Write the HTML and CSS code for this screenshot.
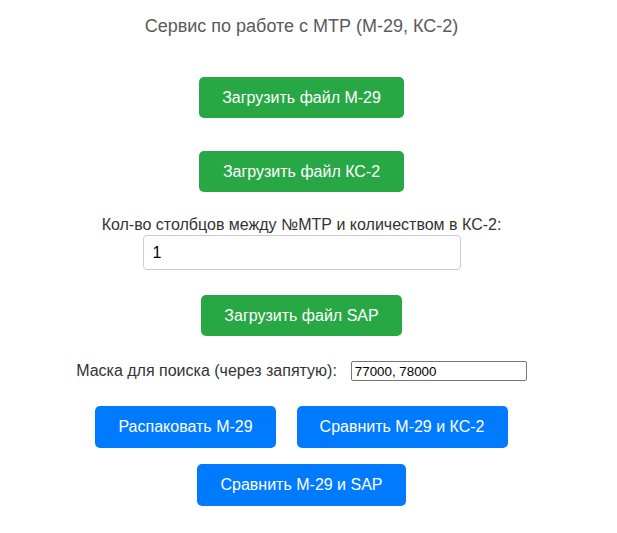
FILE: index.html
```html
<!DOCTYPE html>
<html lang="ru">
<head>
<meta charset="utf-8">
<title>Сервис по работе с МТР</title>
<link rel="stylesheet" href="styles.css">
</head>
<body>
<div class="page">
  <h1 class="title">Сервис по работе с МТР (М-29, КС-2)</h1>
  <button class="btn btn-green btn-upload btn-first">Загрузить файл М-29</button>
  <button class="btn btn-green btn-upload btn-second">Загрузить файл КС-2</button>
  <label class="field-label" for="cols">Кол-во столбцов между №МТР и количеством в КС-2:</label>
  <input class="field-input" id="cols" type="text" value="1">
  <button class="btn btn-green btn-sap">Загрузить файл SAP</button>
  <div class="mask-row">
    <label class="mask-label" for="mask">Маска для поиска (через запятую):</label>
    <input class="mask-input" id="mask" type="text" value="77000, 78000">
  </div>
  <div class="action-row">
    <button class="btn btn-blue">Распаковать М-29</button>
    <button class="btn btn-blue">Сравнить М-29 и КС-2</button>
  </div>
  <div class="action-row action-row-last">
    <button class="btn btn-blue">Сравнить М-29 и SAP</button>
  </div>
</div>
</body>
</html>
```

FILE: styles.css
```css
html, body {
  margin: 0;
  padding: 0;
  background: #ffffff;
}

body {
  font-family: "Liberation Sans", Arial, sans-serif;
  color: #333333;
}

.page {
  width: 603px;
  display: flex;
  flex-direction: column;
  align-items: center;
}

.title {
  margin: 15px 0 0;
  font-size: 18px;
  line-height: 22px;
  font-weight: normal;
  color: #5a5a5a;
}

.btn {
  font-family: "Liberation Sans", Arial, sans-serif;
  font-size: 16px;
  line-height: 21px;
  padding: 10px 23px;
  border: none;
  border-radius: 5px;
  color: #ffffff;
  cursor: pointer;
}

.btn-green {
  background: #28a745;
}

.btn-upload {
  min-width: 205px;
}

.btn-blue {
  background: #007bff;
  line-height: 22px;
}

.btn-first {
  margin-top: 40px;
}

.btn-second {
  margin-top: 33px;
}

.field-label {
  margin-top: 24px;
  font-size: 16px;
  line-height: 18px;
  color: #333333;
}

.field-input {
  margin-top: 1px;
  box-sizing: border-box;
  width: 318px;
  height: 35px;
  padding: 0 9px;
  border: 1px solid #cccccc;
  border-radius: 4px;
  font-family: "Liberation Sans", Arial, sans-serif;
  font-size: 16px;
  color: #000000;
}

.btn-sap {
  margin-top: 25px;
}

.mask-row {
  margin-top: 25px;
  display: flex;
  align-items: center;
  gap: 14px;
}

.mask-label {
  font-size: 16px;
  line-height: 18px;
  color: #333333;
}

.mask-input {
  box-sizing: border-box;
  width: 176px;
  height: 20px;
  padding: 1px 3px;
  border: 1px solid #767676;
  border-radius: 2px;
  font-family: "Liberation Sans", Arial, sans-serif;
  font-size: 13.33px;
  color: #000000;
}

.action-row {
  margin-top: 25px;
  display: flex;
  justify-content: center;
  gap: 21px;
}

.action-row-last {
  margin-top: 16px;
}
```
